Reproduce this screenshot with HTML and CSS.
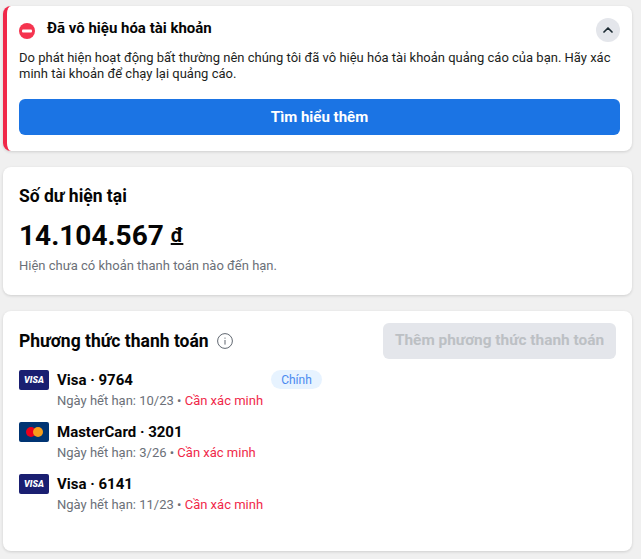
FILE: index.html
```html
<!DOCTYPE html>
<html lang="vi">
<head>
<meta charset="utf-8">
<title>Thanh toán</title>
<link rel="stylesheet" href="styles.css">
</head>
<body>
<main class="page">
  <section class="card alert">
    <div class="alert-head">
      <svg class="stop-icon" width="16" height="16" viewBox="0 0 16 16"><circle cx="8" cy="8" r="8" fill="#f5344f"/><rect x="3" y="6.5" width="10" height="3" rx="1" fill="#fff"/></svg>
      <h2 class="alert-title">Đã vô hiệu hóa tài khoản</h2>
      <span class="collapse">
        <svg width="10" height="6" viewBox="0 0 10 6"><path d="M1 5l4-4 4 4" fill="none" stroke="#1c2b33" stroke-width="1.7" stroke-linecap="round" stroke-linejoin="round"/></svg>
      </span>
    </div>
    <p class="alert-text">Do phát hiện hoạt động bất thường nên chúng tôi đã vô hiệu hóa tài khoản quảng cáo của bạn. Hãy xác minh tài khoản để chạy lại quảng cáo.</p>
    <div class="primary-btn">Tìm hiểu thêm</div>
  </section>

  <section class="card balance">
    <h2 class="section-title">Số dư hiện tại</h2>
    <div class="amount">14.104.567 <span class="currency">đ</span></div>
    <p class="muted">Hiện chưa có khoản thanh toán nào đến hạn.</p>
  </section>

  <section class="card methods">
    <div class="methods-head">
      <div class="methods-title">
        <h2 class="section-title">Phương thức thanh toán</h2>
        <svg width="16" height="16" viewBox="0 0 16 16"><circle cx="8" cy="8" r="7.4" fill="none" stroke="#606770" stroke-width="1"/><rect x="7.5" y="7" width="1" height="4.6" fill="#606770"/><rect x="7.5" y="4.6" width="1" height="1.1" fill="#606770"/></svg>
      </div>
      <div class="disabled-btn">Thêm phương thức thanh toán</div>
    </div>
    <ul class="pay-list">
      <li class="pay-row">
        <span class="pay-icon visa">VISA</span>
        <div class="pay-info">
          <div class="pay-name">Visa · 9764</div>
          <div class="pay-meta">Ngày hết hạn: 10/23 • <span class="warn">Cần xác minh</span></div>
        </div>
        <span class="badge">Chính</span>
      </li>
      <li class="pay-row">
        <span class="pay-icon mc"><i class="dot red"></i><i class="dot amber"></i></span>
        <div class="pay-info">
          <div class="pay-name">MasterCard · 3201</div>
          <div class="pay-meta">Ngày hết hạn: 3/26 • <span class="warn">Cần xác minh</span></div>
        </div>
      </li>
      <li class="pay-row">
        <span class="pay-icon visa">VISA</span>
        <div class="pay-info">
          <div class="pay-name">Visa · 6141</div>
          <div class="pay-meta">Ngày hết hạn: 11/23 • <span class="warn">Cần xác minh</span></div>
        </div>
      </li>
    </ul>
  </section>
</main>
</body>
</html>
```
FILE: styles.css
```css
* { box-sizing: border-box; }
html, body { margin: 0; padding: 0; }
body {
  background: #f0f0f0;
  font-family: Roboto, "Liberation Sans", sans-serif;
  color: #050505;
  width: 641px;
  height: 559px;
  overflow: hidden;
}
h2, p, ul { margin: 0; padding: 0; }
.page {
  display: flex;
  flex-direction: column;
  gap: 16px;
  padding: 6px 9px 0 3px;
}
.card {
  background: #fff;
  border-radius: 8px;
  box-shadow: 0 1px 3px rgba(0, 0, 0, .14);
  padding: 0 16px;
}
.alert {
  height: 145px;
  border-left: 4px solid #f02849;
  padding: 12px 12px 0 12px;
}
.alert-head {
  display: flex;
  align-items: center;
  height: 24px;
}
.stop-icon { margin-right: 12px; flex: none; margin-bottom: -1px; }
.alert-title { flex: 1; font-size: 15px; font-weight: 700; line-height: 20px; margin-bottom: 5px; }
.collapse {
  width: 24px;
  height: 24px;
  border-radius: 50%;
  background: #e4e6eb;
  display: flex;
  align-items: center;
  justify-content: center;
}
.alert-text {
  font-size: 13px;
  line-height: 16px;
  margin-top: 8px;
  color: #1c1e21;
}
.primary-btn {
  margin-top: 17px;
  height: 36px;
  border-radius: 6px;
  background: #1b74e4;
  color: #fff;
  font-size: 15px;
  font-weight: 700;
  display: flex;
  align-items: center;
  justify-content: center;
}
.balance { height: 128px; padding-top: 19px; }
.section-title { font-size: 17.5px; font-weight: 700; line-height: 20px; }
.amount { font-size: 28px; font-weight: 700; line-height: 34px; margin-top: 12px; }
.currency { font-size: 20px; text-decoration: underline; vertical-align: 3px; }
.muted { font-size: 13px; line-height: 16px; color: #6b7078; margin-top: 5px; }
.methods { height: 240px; padding-top: 12px; }
.methods-head { display: flex; align-items: center; justify-content: space-between; height: 36px; }
.methods-title { display: flex; align-items: center; gap: 8px; margin-top: -1px; }
.disabled-btn {
  width: 233px;
  height: 36px;
  border-radius: 6px;
  background: #e4e6eb;
  color: #bcc0c4;
  font-size: 15.4px;
  font-weight: 700;
  padding-bottom: 2px;
  display: flex;
  align-items: center;
  justify-content: center;
}
.pay-list { list-style: none; margin-top: 11px; display: flex; flex-direction: column; gap: 12px; }
.pay-row { display: flex; align-items: flex-start; height: 40px; }
.pay-icon {
  width: 30px;
  height: 20px;
  border-radius: 2px;
  margin-right: 8px;
  flex: none;
  display: flex;
  align-items: center;
  justify-content: center;
}
.visa { background: #1a1f71; color: #fff; font-size: 9px; font-weight: 900; font-style: italic; }
.mc { background: #003473; }
.dot { width: 10px; height: 10px; border-radius: 50%; display: block; }
.red { background: #eb001b; }
.amber { background: #f79e1b; margin-left: -3px; }
.pay-info { width: 214px; flex: none; }
.pay-name { font-size: 15px; font-weight: 700; line-height: 20px; }
.pay-meta { font-size: 13px; line-height: 20px; color: #6b7078; margin-top: 1px; }
.warn { color: #f02849; }
.badge {
  width: 51px;
  height: 19px;
  border-radius: 10px;
  background: #e7f3ff;
  color: #4a8af0;
  font-size: 12px;
  display: flex;
  align-items: center;
  justify-content: center;
}
```
